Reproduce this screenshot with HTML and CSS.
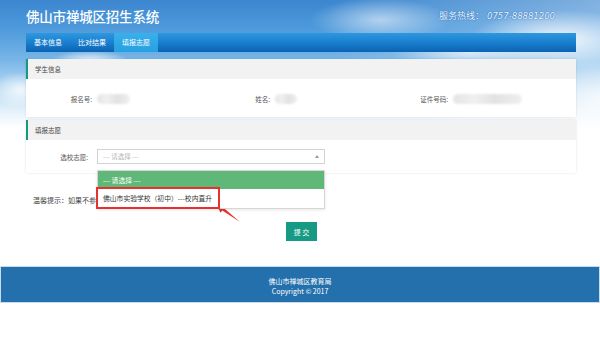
FILE: index.html
```html
<!DOCTYPE html>
<html lang="zh-CN">
<head>
    <meta charset="UTF-8">
    <title>佛山市禅城区招生系统</title>
    <link rel="stylesheet" href="styles.css">
</head>
<body>
<div class="page">
    <header class="top">
        <h1>佛山市禅城区招生系统</h1>
        <div class="hotline">服务热线：<span class="num">0757-88881200</span></div>
    </header>

    <nav class="tabs">
        <a class="tab">基本信息</a>
        <a class="tab">比对结果</a>
        <a class="tab active">填报志愿</a>
    </nav>

    <main class="content">
        <section class="panel">
            <div class="panel-head">学生信息</div>
            <div class="panel-body info-row">
                <div class="field"><span class="label">报名号:</span><span class="masked w1"></span></div>
                <div class="field"><span class="label">姓名:</span><span class="masked w2"></span></div>
                <div class="field"><span class="label">证件号码:</span><span class="masked w3"></span></div>
            </div>
        </section>

        <section class="panel">
            <div class="panel-head">填报志愿</div>
            <div class="panel-body choice-row">
                <span class="label">选校志愿:</span>
                <div class="select-wrap">
                    <div class="select">--- 请选择 ---<span class="caret"></span></div>
                    <ul class="dropdown">
                        <li class="opt selected">--- 请选择 ---</li>
                        <li class="opt">佛山市实验学校（初中）---校内直升</li>
                        <li class="mark"></li>
                    </ul>
                </div>
            </div>
        </section>

        <!-- the rest of the tip sits under the open dropdown -->
        <p class="tip">温馨提示：如果不参加派位，请选择志愿学校后提交。</p>

        <div class="actions">
            <button class="submit">提 交</button>
        </div>
    </main>

    <footer class="footer">
        <div>佛山市禅城区教育局</div>
        <div>Copyright © 2017</div>
    </footer>

    <!-- annotation arrow -->
    <svg class="arrow" width="600" height="350" viewBox="0 0 600 350">
        <polygon points="240,222 222.3,210.6 220.6,212.8 216,204 225.8,206 224.1,208.2" fill="#e8312c"/>
    </svg>
</div>
</body>
</html>
```

FILE: styles.css
```css
* {
    margin: 0;
    padding: 0;
    box-sizing: border-box;
}

body {
    font-family: "Noto Sans CJK SC", "Noto Sans", sans-serif;
    background: #fff;
    color: #333;
}

.page {
    position: relative;
    width: 600px;
    height: 350px;
    overflow: hidden;
    /* sky banner with clouds */
    background:
        radial-gradient(ellipse 40px 12px at 90px 62px, rgba(255,255,255,0.95), rgba(255,255,255,0) 100%),
        radial-gradient(ellipse 30px 18px at 20px 90px, rgba(255,255,255,0.8), rgba(255,255,255,0) 100%),
        radial-gradient(ellipse 70px 22px at 380px 20px, rgba(255,255,255,0.55), rgba(255,255,255,0) 100%),
        radial-gradient(ellipse 80px 16px at 470px 52px, rgba(255,255,255,0.7), rgba(255,255,255,0) 100%),
        radial-gradient(ellipse 90px 30px at 560px 40px, rgba(255,255,255,0.9), rgba(255,255,255,0) 100%),
        radial-gradient(ellipse 60px 40px at 600px 100px, rgba(255,255,255,0.7), rgba(255,255,255,0) 100%),
        linear-gradient(to right, rgba(255,255,255,0) 55%, rgba(255,255,255,0.35) 100%) 0 0 / 600px 130px no-repeat,
        linear-gradient(to bottom, #3b86cf 0, #4f9bdc 30px, #78b6e8 60px, #b8daf3 90px, #e6f2fb 112px, #fff 128px) 0 0 / 600px 130px no-repeat,
        #fff;
}

.top {
    height: 33px;
    margin: 0 24px 0 26px;
    display: flex;
    align-items: center;
    justify-content: space-between;
}

.top h1 {
    font-size: 13.5px;
    font-weight: 500;
    color: #fff;
    letter-spacing: -0.2px;
    margin-top: -2px;
}

.hotline {
    font-size: 9px;
    color: #eef6ff;
    text-shadow: 0 0 1px #2a6fb5, 0 0 1px #2a6fb5;
    margin-top: -2px;
    margin-right: 21px;
}

.hotline .num {
    font-family: "DejaVu Sans", sans-serif;
    font-style: italic;
    font-size: 8.5px;
    margin-left: 3px;
}

.tabs {
    height: 19px;
    margin: 0 24px 0 26px;
    display: flex;
    background: linear-gradient(to bottom, #2e98de 0, #1a7fcf 50%, #0b62b2 100%);
}

.tab {
    width: 44px;
    font-size: 7px;
    color: #fff;
    text-align: center;
    line-height: 19px;
}

.tab.active {
    background: linear-gradient(to bottom, #3ab0ea 0, #27a0e2 100%);
}

.content {
    position: relative;
    margin: 7px 24px 0 26px;
}

.panel {
    background: #fff;
    box-shadow: 0 0 2px rgba(0, 0, 0, 0.12);
    margin-bottom: 3px;
}

.panel-head {
    height: 20px;
    line-height: 20px;
    background: #f2f2f2;
    border-left: 2px solid #169a7c;
    padding-left: 7px;
    font-size: 6.5px;
    color: #444;
}

.panel-body {
    font-size: 6.5px;
    color: #555;
}

.info-row {
    height: 38px;
    padding-left: 6px;
    display: grid;
    grid-template-columns: repeat(3, 178px);
    align-items: center;
}

.field {
    display: flex;
    align-items: center;
    margin-top: 1px;
}

.label {
    width: 60px;
    text-align: right;
}

.masked {
    height: 10px;
    margin-left: 5px;
    border-radius: 5px;
    background: linear-gradient(to right, #e4e4e4, #f0f0f0 30%, #e2e2e2 60%, #efefef);
    filter: blur(1px);
}

.masked.w1 { width: 33px; }
.masked.w2 { width: 22px; }
.masked.w3 { width: 69px; }

.choice-row {
    height: 33px;
    display: flex;
    align-items: center;
}

.choice-row .label {
    width: 62px;
    margin-top: 1px;
}

.select-wrap {
    position: relative;
    margin-left: 9px;
    width: 228px;
}

.select {
    position: relative;
    height: 15px;
    line-height: 13px;
    border: 1px solid #d2d2d2;
    background: #fff;
    padding-left: 5px;
    color: #b5b5b5;
    font-size: 6.5px;
}

.caret {
    position: absolute;
    right: 5px;
    top: 5px;
    border-left: 2.5px solid transparent;
    border-right: 2.5px solid transparent;
    border-bottom: 3px solid #9a9a9a;
}

.dropdown {
    position: absolute;
    top: 21px;
    left: 0;
    width: 228px;
    list-style: none;
    background: #fff;
    border: 1px solid #d6d6d6;
    box-shadow: 0 1px 3px rgba(0, 0, 0, 0.1);
    z-index: 5;
}

.opt {
    height: 19px;
    line-height: 19px;
    padding-left: 5px;
    font-size: 6.8px;
    color: #333;
}

.opt.selected {
    height: 18px;
    line-height: 18px;
    background: #5fb878;
    color: #fff;
}

.mark {
    position: absolute;
    left: -2px;
    top: 16px;
    width: 124px;
    height: 22px;
    border: 2px solid #e8312c;
}

.tip {
    margin: 22px 0 0 7px;
    font-size: 7px;
    line-height: 10px;
    color: #444;
}

.actions {
    display: flex;
    justify-content: center;
    margin-top: 17px;
    padding-left: 1px;
}

.submit {
    width: 31px;
    height: 19px;
    border: none;
    background: #169a84;
    color: #fff;
    font-family: inherit;
    font-size: 7px;
}

.footer {
    margin-top: 25px;
    height: 37px;
    background: #2470ad;
    border: 1px solid #c8dcec;
    color: #fff;
    font-size: 7px;
    line-height: 10px;
    text-align: center;
    padding-top: 9px;
}

.arrow {
    position: absolute;
    left: 0;
    top: 0;
    pointer-events: none;
}
```
